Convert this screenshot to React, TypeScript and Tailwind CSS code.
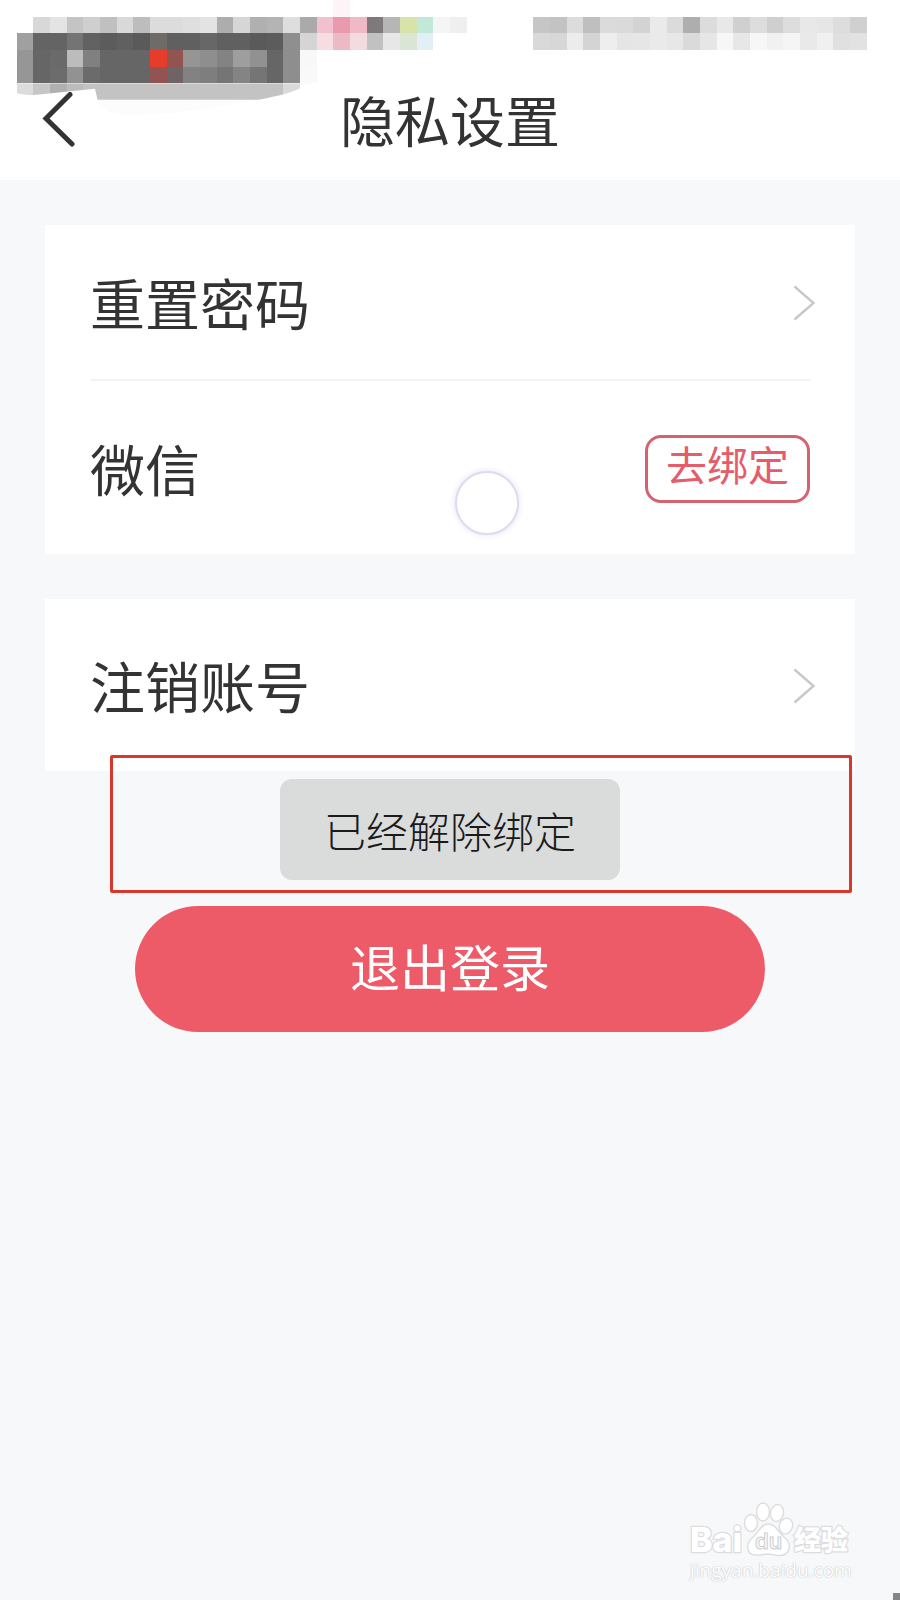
import { ReactNode } from 'react'

type MosaicRow = { y: number; x: number; colors: string[] }

// Each entry is one cell of the blurred-out status bar, left to right
const MOSAIC: MosaicRow[] = [
  { y: 0, x: 20, colors: ['#fcf4f6'] },
  {
    y: 1,
    x: 2,
    colors: [
      '#d8d8d8', '#e4e4e4', '#c4c4c4', '#cfcfcf', '#c0c0c0', '#d9d9d9', '#bdbdbd', '#dcdcdc', '#dcdcdc',
      '#dfdfdf', '#e3e3e3', '#adadad', '#d6d6d6', '#b0b0b0', '#b4b4b4', '#dedede', '#aaaaaa', '#f2c1cf',
      '#e89bae', '#f0b9c6', '#7e7a7b', '#b6b6b6', '#d8e3a9', '#c2e8da', '#f4f6f5', '#efefef',
    ],
  },
  {
    y: 1,
    x: 32,
    colors: [
      '#c6c6c6', '#c3c3c3', '#dcdcdc', '#bfbfbf', '#dbdbdb', '#dadada', '#d3d3d3', '#eaeaea', '#dbdbdb', '#aeaeae',
      '#dcdcdc', '#e8e8e8', '#d0d0d0', '#dddddd', '#cfcfcf', '#dddddd', '#e8e8e8', '#e6e6e6', '#dddddd', '#d0d0d0',
    ],
  },
  {
    y: 2,
    x: 1,
    colors: [
      '#a0a0a0', '#646464', '#646464', '#747474', '#626262', '#5c5c5c', '#606060', '#5a5a5a', '#6f6b69',
      '#606060', '#606060', '#676767', '#606060', '#606060', '#5a5a5a', '#5c5c5c', '#8f8f8f', '#d5d5d5',
      '#f5dde2', '#ecbac4', '#f3dce0', '#c1c1c1', '#e7e7e7', '#dae5d5', '#e2f0f6',
    ],
  },
  {
    y: 2,
    x: 32,
    colors: [
      '#d9d9d9', '#d7d7d7', '#ececec', '#d4d4d4', '#eeeeee', '#e5e5e5', '#e6e6e6', '#eaeaea', '#e7e7e7', '#dadada',
      '#e6e6e6', '#f7f7f7', '#e7e7e7', '#f7f7f7', '#f1f1f1', '#f5f5f5', '#e9e9e9', '#f0f0f0', '#e0e0e0', '#e2e2e2',
    ],
  },
  {
    y: 3,
    x: 1,
    colors: [
      '#969696', '#666666', '#6a6a6a', '#bcbcbc', '#808080', '#666666', '#666666', '#666666', '#e63c2c',
      '#915450', '#969593', '#8e8e8e', '#838383', '#9e9e9e', '#919191', '#666666', '#8e8e8e', '#f8f8f8',
    ],
  },
  {
    y: 4,
    x: 1,
    colors: [
      '#969696', '#666666', '#6c6c6c', '#929292', '#6b6b6b', '#666666', '#666666', '#666666', '#915450',
      '#6f6463', '#828282', '#7e7e7e', '#757575', '#848484', '#757575', '#666666', '#8e8e8e', '#f9f9f9',
    ],
  },
]

const SMEAR = [
  '#dcdcdc', '#c6c6c6', '#b0b0b0', '#bcbcbc', '#c3c3c3', '#c3c3c3', '#c3c3c3', '#c3c3c3', '#c3c3c3',
  '#c3c3c3', '#c3c3c3', '#c3c3c3', '#c3c3c3', '#c3c3c3', '#c3c3c3', '#c3c3c3', '#dadada',
]

function StatusMosaic() {
  return (
    <svg
      className="pointer-events-none absolute inset-x-0 top-0 w-full"
      viewBox="0 0 54 8"
      shapeRendering="crispEdges"
      aria-hidden="true"
    >
      <defs>
        <clipPath id="smear">
          <path d="M1 5V5.6Q1.6 5.75 2.2 5.68L5.7 5.32L5.85 5.98H15.5Q17.2 5.7 18 5.3V5Z" />
        </clipPath>
      </defs>
      <path d="M5.8 6Q6.3 6.8 7.5 6.9Q13 6.9 19 4.9V4H5.8Z" fill="#fcfcfc" />
      {MOSAIC.map((row) =>
        row.colors.map((color, i) => (
          <rect key={`${row.y}-${row.x + i}`} x={row.x + i} y={row.y} width={1} height={1} fill={color} />
        )),
      )}
      <g clipPath="url(#smear)">
        {SMEAR.map((color, i) => (
          <rect key={i} x={i + 1} y={5} width={1} height={1} fill={color} />
        ))}
      </g>
    </svg>
  )
}

function Chevron() {
  return (
    <svg className="-mr-1.5 h-10 w-6" viewBox="0 0 24 40" fill="none" stroke="#c8c8c8" strokeWidth="2.4" aria-hidden="true">
      <path d="M2.5 3.5L21.5 20L2.5 36.5" />
    </svg>
  )
}

function Card({ children }: { children: ReactNode }) {
  return <section className="bg-white px-[45px]">{children}</section>
}

function LinkRow({ label }: { label: string }) {
  return (
    <button type="button" className="flex w-full items-center justify-between pt-[38px] pb-9 text-left">
      <span className="pb-1 text-[55px] leading-[76px]">{label}</span>
      <Chevron />
    </button>
  )
}

function Watermark() {
  return (
    <div className="absolute right-12 bottom-[21px] w-[164px]">
      <svg className="h-[60px] w-full" viewBox="0 0 164 60" aria-hidden="true">
        <g fill="#ffffff" stroke="#dcdddf" strokeWidth="1.4">
          <ellipse cx="63" cy="21" rx="6.5" ry="8.5" />
          <ellipse cx="75" cy="10" rx="6.5" ry="9" />
          <ellipse cx="89" cy="11" rx="6.5" ry="8.5" transform="rotate(12 89 11)" />
          <ellipse cx="98" cy="24" rx="6.5" ry="8" transform="rotate(18 98 24)" />
          <path d="M80 22C88 22 90 30 96 35C104 41 103 53 92 53.5C86 53.5 84 52 80 52C76 52 73 53.5 68 53C58 53 57 42 65 35C71 30 73 22 80 22Z" />
        </g>
        <g fill="#ffffff" stroke="#dcdddf" strokeWidth="2.5" paintOrder="stroke">
          <text x="2" y="50" fontSize="34" fontWeight="800" fontFamily="Inter, sans-serif">Bai</text>
          <text x="106" y="48" fontSize="27" fontWeight="900" fontFamily="'Noto Sans CJK SC', sans-serif">经验</text>
        </g>
        <text x="67" y="47" fontSize="22" fontWeight="600" fontFamily="Inter, sans-serif" fill="#f7f8fa" stroke="#cfd0d2">du</text>
      </svg>
      <p className="pl-0.5 font-['Open_Sans'] text-[19px] leading-[17px] text-white [text-shadow:0_0_1px_#bfc0c2,0_0_2px_#cfd0d2]">
        jingyan.baidu.com
      </p>
    </div>
  )
}

export default function App() {
  return (
    <div className="relative min-h-screen overflow-hidden bg-[#f7f8fa] font-['Noto_Sans_CJK_SC',sans-serif] text-[#333333]">
      <header className="relative flex h-[180px] items-end justify-center bg-white pb-5">
        <StatusMosaic />
        <button type="button" aria-label="返回" className="absolute bottom-8 left-10">
          <svg className="h-14 w-10" viewBox="0 0 40 56" fill="none" stroke="#333333" strokeWidth="5" strokeLinecap="round" aria-hidden="true">
            <path d="M30 2.5L6 26.5L32 52" />
          </svg>
        </button>
        <h1 className="pb-1 text-[55px] leading-[76px]">隐私设置</h1>
      </header>

      <main className="relative px-[45px] pt-[45px]">
        <Card>
          <LinkRow label="重置密码" />
          <div className="flex items-center justify-between border-t-2 border-[#f3f3f4] pt-12 pb-[45px]">
            <span className="pb-1 text-[55px] leading-[76px]">微信</span>
            <button
              type="button"
              className="rounded-2xl border-3 border-[#d5636f] px-[18px] pb-3 text-[41px] leading-[50px] text-[#e65c6a]"
            >
              去绑定
            </button>
          </div>
        </Card>
        <div className="mt-[45px]">
          <Card>
            <div className="py-[9px]">
              <LinkRow label="注销账号" />
            </div>
          </Card>
        </div>
        <button
          type="button"
          className="mx-auto mt-[135px] block w-7/9 rounded-full bg-[#ed5b69] pt-[18px] pb-[26px] text-[50px] leading-[82px] text-white"
        >
          退出登录
        </button>

        {/* touch point */}
        <span className="absolute top-[291px] left-[455px] size-16 rounded-full border-2 border-[#dcdcf0] bg-white shadow-[0_0_6px_#e0e0f6]" />

        {/* toast and the frame drawn round it */}
        <div className="absolute top-[575px] right-12 left-[110px] h-[138px] rounded-xs border-3 border-[#d8372c]" />
        <div
          role="status"
          className="absolute top-[599px] left-1/2 -translate-x-1/2 rounded-xl bg-[#dadcdb] px-11 py-5 text-[42px] leading-[61px] font-light whitespace-nowrap text-[#1a1a1a]"
        >
          已经解除绑定
        </div>
      </main>

      <Watermark />
      <span className="absolute right-0 bottom-0 size-[7px] bg-[#858585]" />
    </div>
  )
}
